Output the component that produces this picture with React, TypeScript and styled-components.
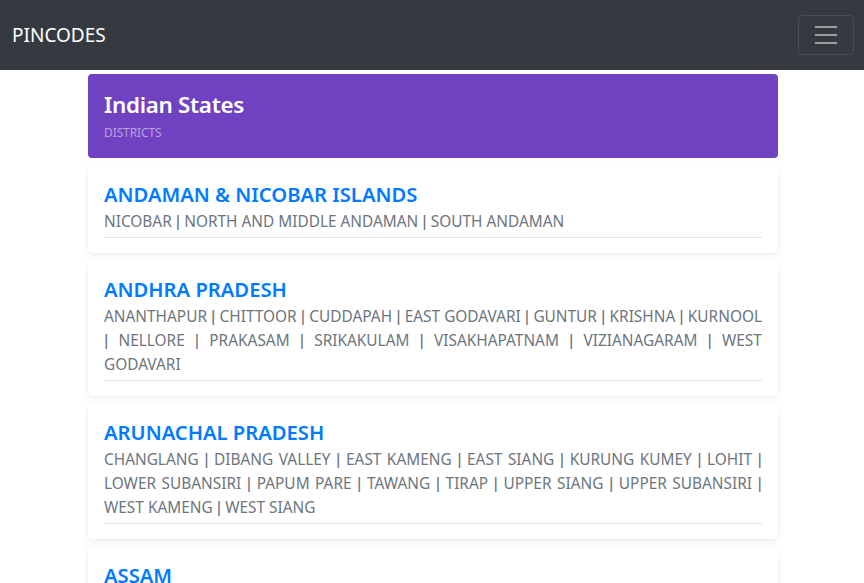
import React from "react";
import styled, { createGlobalStyle } from "styled-components";

const GlobalStyle = createGlobalStyle`
  html, body { margin: 0; padding: 0; background: #fff; }
  body {
    font-family: "Noto Sans", "Open Sans", "Liberation Sans", sans-serif;
    color: #212529;
    -webkit-font-smoothing: antialiased;
  }
  ::-webkit-scrollbar { display: none; }
  * { box-sizing: border-box; }
`;

const Navbar = styled.nav`
  height: 70px;
  background: #343a40;
  display: flex;
  align-items: center;
  justify-content: space-between;
  padding: 0 10px 0 12px;
`;

const Brand = styled.a`
  color: #fff;
  font-size: 19px;
  line-height: 30px;
  text-decoration: none;
`;

const Toggler = styled.button`
  width: 56px;
  height: 40px;
  background: transparent;
  border: 1px solid rgba(255, 255, 255, 0.1);
  border-radius: 4px;
  display: flex;
  align-items: center;
  justify-content: center;
  padding: 0;
  cursor: pointer;
`;

const Container = styled.main`
  width: 690px;
  margin: 4px 0 0 calc(50% - 344px);
  display: flex;
  flex-direction: column;
  gap: 7px;
`;

const Header = styled.header`
  background: #6f42c1;
  border-radius: 4px;
  padding: 15px 16px 16px;
  height: 84px;
`;

const HeaderTitle = styled.h1`
  margin: 0;
  color: #fff;
  font-size: 22.4px;
  line-height: 32px;
  font-weight: 600;
  letter-spacing: -0.3px;
`;

const HeaderSub = styled.div`
  color: rgba(255, 255, 255, 0.5);
  font-size: 12px;
  line-height: 20px;
  margin-top: 2px;
  letter-spacing: -0.1px;
`;

const Card = styled.section`
  background: #fff;
  border-radius: 5px;
  box-shadow: 0 2px 6px rgba(0, 0, 0, 0.08);
  padding: 15px 16px 15px;
`;

const StateTitle = styled.h2`
  margin: 0 0 2px;
  color: #007bff;
  font-size: 20.2px;
  line-height: 28px;
  font-weight: 600;
`;

const Districts = styled.p`
  margin: 0;
  color: #6c757d;
  font-size: 15.4px;
  line-height: 24px;
  text-align: justify;
`;

const Sep = styled.span`
  font-family: "Liberation Sans", sans-serif;
  font-size: 17px;
  line-height: 0;
  color: #6c757d;
`;

const Rule = styled.hr`
  margin: 3px 0 0;
  border: 0;
  border-top: 1px solid rgba(0, 0, 0, 0.1);
`;

function Hamburger() {
  return (
    <svg width="30" height="30" viewBox="0 0 30 30" aria-hidden="true">
      <path
        d="M4 7h22M4 15h22M4 23h22"
        stroke="rgba(255,255,255,0.5)"
        strokeWidth="2"
        strokeLinecap="butt"
      />
    </svg>
  );
}

const states: { name: string; districts: string[] }[] = [
  {
    name: "ANDAMAN & NICOBAR ISLANDS",
    districts: ["NICOBAR", "NORTH AND MIDDLE ANDAMAN", "SOUTH ANDAMAN"],
  },
  {
    name: "ANDHRA PRADESH",
    districts: [
      "ANANTHAPUR", "CHITTOOR", "CUDDAPAH", "EAST GODAVARI", "GUNTUR", "KRISHNA",
      "KURNOOL", "NELLORE", "PRAKASAM", "SRIKAKULAM", "VISAKHAPATNAM",
      "VIZIANAGARAM", "WEST GODAVARI",
    ],
  },
  {
    name: "ARUNACHAL PRADESH",
    districts: [
      "CHANGLANG", "DIBANG VALLEY", "EAST KAMENG", "EAST SIANG", "KURUNG KUMEY",
      "LOHIT", "LOWER SUBANSIRI", "PAPUM PARE", "TAWANG", "TIRAP", "UPPER SIANG",
      "UPPER SUBANSIRI", "WEST KAMENG", "WEST SIANG",
    ],
  },
  {
    name: "ASSAM",
    districts: [
      "BARPETA", "BONGAIGAON", "CACHAR", "DARRANG", "DHEMAJI", "DHUBRI",
      "DIBRUGARH", "GOALPARA", "GOLAGHAT", "HAILAKANDI", "JORHAT", "KAMRUP",
      "KARBI ANGLONG", "KARIMGANJ", "KOKRAJHAR", "LAKHIMPUR", "MARIGAON",
      "NAGAON", "NALBARI", "NORTH CACHAR HILLS", "SIBSAGAR", "SONITPUR", "TINSUKIA",
    ],
  },
];

export default function App() {
  return (
    <>
      <GlobalStyle />
      <Navbar>
        <Brand href="#">PINCODES</Brand>
        <Toggler aria-label="Toggle navigation">
          <Hamburger />
        </Toggler>
      </Navbar>
      <Container>
        <Header>
          <HeaderTitle>Indian States</HeaderTitle>
          <HeaderSub>DISTRICTS</HeaderSub>
        </Header>
        {states.map((s) => (
          <Card key={s.name}>
            <StateTitle>{s.name}</StateTitle>
            <Districts>
              {s.districts.map((d, i) => (
                <React.Fragment key={d}>
                  {i > 0 && (
                    <>
                      {" "}
                      <Sep>|</Sep>{" "}
                    </>
                  )}
                  {d}
                </React.Fragment>
              ))}
            </Districts>
            <Rule />
          </Card>
        ))}
      </Container>
    </>
  );
}
